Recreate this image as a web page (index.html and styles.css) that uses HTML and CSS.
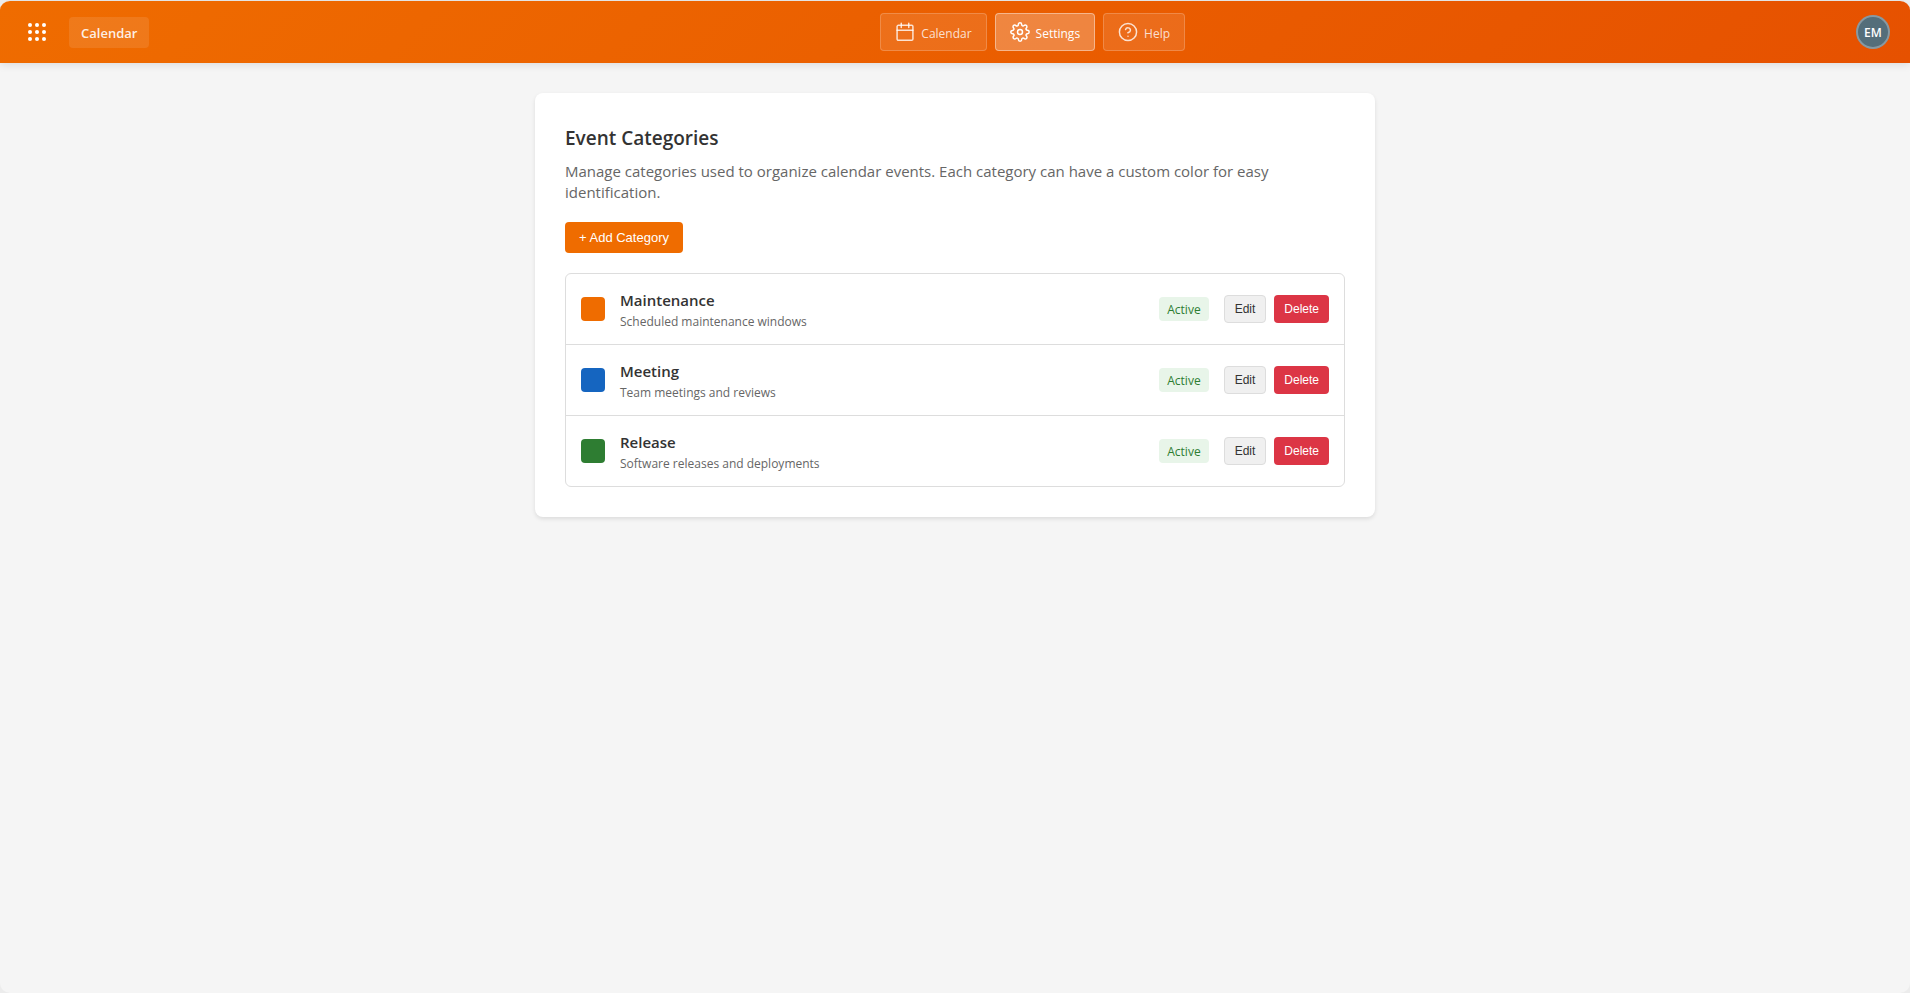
FILE: index.html
```html
<!DOCTYPE html>
<html lang="en">
<head>
<meta charset="utf-8">
<meta name="viewport" content="width=device-width, initial-scale=1">
<title>Event Categories</title>
<link rel="stylesheet" href="styles.css">
</head>
<body>
<div class="app">
    <header class="header">
        <button class="launcher" type="button" aria-label="Apps">
            <svg width="18" height="18" viewBox="0 0 18 18" fill="currentColor">
                <circle cx="2" cy="2" r="2"/><circle cx="9" cy="2" r="2"/><circle cx="16" cy="2" r="2"/>
                <circle cx="2" cy="9" r="2"/><circle cx="9" cy="9" r="2"/><circle cx="16" cy="9" r="2"/>
                <circle cx="2" cy="16" r="2"/><circle cx="9" cy="16" r="2"/><circle cx="16" cy="16" r="2"/>
            </svg>
        </button>
        <a href="#" class="app-name">Calendar</a>

        <nav class="nav">
            <a href="#" class="nav-btn">
                <svg class="icon" viewBox="0 0 24 24"><rect x="2.5" y="4" width="19" height="18" rx="1.5"/><path d="M16.5 1.5v5M7.5 1.5v5M2.5 10h19"/></svg>
                <span>Calendar</span>
            </a>
            <a href="#" class="nav-btn active">
                <svg class="icon" viewBox="0 0 24 24"><circle cx="12" cy="12" r="3"/><path d="M19.4 15a1.65 1.65 0 0 0 .33 1.82l.06.06a2 2 0 0 1 0 2.83 2 2 0 0 1-2.83 0l-.06-.06a1.65 1.65 0 0 0-1.82-.33 1.65 1.65 0 0 0-1 1.51V21a2 2 0 0 1-2 2 2 2 0 0 1-2-2v-.09A1.65 1.65 0 0 0 9 19.4a1.65 1.65 0 0 0-1.82.33l-.06.06a2 2 0 0 1-2.83 0 2 2 0 0 1 0-2.83l.06-.06a1.65 1.65 0 0 0 .33-1.82 1.65 1.65 0 0 0-1.51-1H3a2 2 0 0 1-2-2 2 2 0 0 1 2-2h.09A1.65 1.65 0 0 0 4.6 9a1.65 1.65 0 0 0-.33-1.82l-.06-.06a2 2 0 0 1 0-2.83 2 2 0 0 1 2.83 0l.06.06a1.65 1.65 0 0 0 1.82.33H9a1.65 1.65 0 0 0 1-1.51V3a2 2 0 0 1 2-2 2 2 0 0 1 2 2v.09a1.65 1.65 0 0 0 1 1.51 1.65 1.65 0 0 0 1.82-.33l.06-.06a2 2 0 0 1 2.83 0 2 2 0 0 1 0 2.83l-.06.06a1.65 1.65 0 0 0-.33 1.82V9a1.65 1.65 0 0 0 1.51 1H21a2 2 0 0 1 2 2 2 2 0 0 1-2 2h-.09a1.65 1.65 0 0 0-1.51 1z"/></svg>
                <span>Settings</span>
            </a>
            <a href="#" class="nav-btn">
                <svg class="icon" viewBox="0 0 24 24"><circle cx="12" cy="12" r="10.3"/><path d="M9.09 9a3 3 0 0 1 5.83 1c0 2-3 3-3 3M12 17h.01"/></svg>
                <span>Help</span>
            </a>
        </nav>

        <button class="avatar" type="button">EM</button>
    </header>

    <main class="container">
        <section class="card">
            <h2>Event Categories</h2>
            <p class="desc">Manage categories used to organize calendar events. Each category can have a custom color for easy identification.</p>
            <button class="btn btn-primary" type="button">+ Add Category</button>

            <ul class="category-list">
                <li class="category">
                    <span class="swatch orange"></span>
                    <div class="info">
                        <div class="name">Maintenance</div>
                        <div class="sub">Scheduled maintenance windows</div>
                    </div>
                    <span class="badge">Active</span>
                    <div class="actions">
                        <button class="btn btn-small" type="button">Edit</button>
                        <button class="btn btn-small btn-danger" type="button">Delete</button>
                    </div>
                </li>
                <li class="category">
                    <span class="swatch blue"></span>
                    <div class="info">
                        <div class="name">Meeting</div>
                        <div class="sub">Team meetings and reviews</div>
                    </div>
                    <span class="badge">Active</span>
                    <div class="actions">
                        <button class="btn btn-small" type="button">Edit</button>
                        <button class="btn btn-small btn-danger" type="button">Delete</button>
                    </div>
                </li>
                <li class="category">
                    <span class="swatch green"></span>
                    <div class="info">
                        <div class="name">Release</div>
                        <div class="sub">Software releases and deployments</div>
                    </div>
                    <span class="badge">Active</span>
                    <div class="actions">
                        <button class="btn btn-small" type="button">Edit</button>
                        <button class="btn btn-small btn-danger" type="button">Delete</button>
                    </div>
                </li>
            </ul>
        </section>
    </main>
</div>
</body>
</html>
```
FILE: styles.css
```css
* { box-sizing: border-box; margin: 0; padding: 0; }
body { font: 15px/21px "Segoe UI", "Open Sans", sans-serif; color: #333; background: #ececec; }
a { text-decoration: none; color: inherit; }

.app { min-height: 100vh; border-top: 1px solid #e4e4e4; border-radius: 10px; background: #f5f5f5; overflow: hidden; }

/* header */
.header { display: flex; align-items: center; height: 62px; padding: 0 20px; color: #fff; background: linear-gradient(135deg, #ef6c00 0%, #e65100 100%); box-shadow: 0 2px 8px rgba(0, 0, 0, 0.1); }
.launcher { display: flex; padding: 8px; margin-right: 15px; border: 0; background: none; color: #fff; cursor: pointer; }
.app-name { padding: 8px 12px 6px; border-radius: 4px; background: rgba(255, 255, 255, 0.1); color: rgba(255, 255, 255, 0.9); font-size: 13px; font-weight: 600; line-height: 17px; }
.nav { flex: 1; display: flex; justify-content: center; gap: 8px; margin-left: 60px; }
.nav-btn { display: flex; align-items: center; gap: 6px; padding: 8px 14px; border: 1px solid rgba(255, 255, 255, 0.2); border-radius: 4px; background: rgba(255, 255, 255, 0.1); color: rgba(255, 255, 255, 0.8); font-size: 12px; line-height: 16px; }
.nav-btn span { padding-top: 3px; }
.nav-btn.active { border-color: rgba(255, 255, 255, 0.4); background: rgba(255, 255, 255, 0.25); color: #fff; }
.icon { width: 20px; height: 20px; fill: none; stroke: currentColor; stroke-width: 1.8; stroke-linecap: round; stroke-linejoin: round; }
.avatar { width: 34px; height: 34px; padding-top: 2px; border: 2px solid rgba(255, 255, 255, 0.3); border-radius: 50%; background: #546e7a; color: #fff; font: 600 12px/16px "Segoe UI", "Open Sans", sans-serif; cursor: pointer; }

/* categories */
.container { max-width: 840px; margin: 30px auto; }
.card { padding: 30px; border-radius: 8px; background: #fff; box-shadow: 0 2px 4px rgba(0, 0, 0, 0.1); }
.card h2 { margin-bottom: 7px; font-size: 19px; font-weight: 600; line-height: 31px; }
.desc { margin-bottom: 19px; color: #666; }

.btn { border: 1px solid #ddd; border-radius: 4px; background: #f0f0f0; color: #333; font-family: Arial, "Liberation Sans", sans-serif; cursor: pointer; }
.btn-primary { display: block; padding: 8px 14px; border: 0; background: #ef6c00; color: #fff; font-size: 13px; line-height: 15px; }
.btn-small { padding: 6px 10px; font-size: 12px; line-height: 14px; }
.btn-danger { padding: 7px 10px; border: 0; background: #dc3545; color: #fff; }

.category-list { margin-top: 20px; border: 1px solid #ddd; border-radius: 6px; list-style: none; }
.category { display: flex; align-items: center; gap: 15px; padding: 15px; border-bottom: 1px solid #ddd; }
.category:last-child { border-bottom: 0; }
.swatch { width: 24px; height: 24px; border-radius: 4px; }
.swatch.orange { background: #ef6c00; }
.swatch.blue { background: #1565c0; }
.swatch.green { background: #2e7d32; }
.info { flex: 1; padding-top: 1px; }
.name { font-weight: 600; }
.sub { margin-top: 4px; color: #666; font-size: 12px; line-height: 14px; }
.badge { padding: 5px 8px 3px; border-radius: 4px; background: #e8f5e9; color: #2e7d32; font-size: 12px; line-height: 16px; }
.actions { display: flex; gap: 8px; }
```
